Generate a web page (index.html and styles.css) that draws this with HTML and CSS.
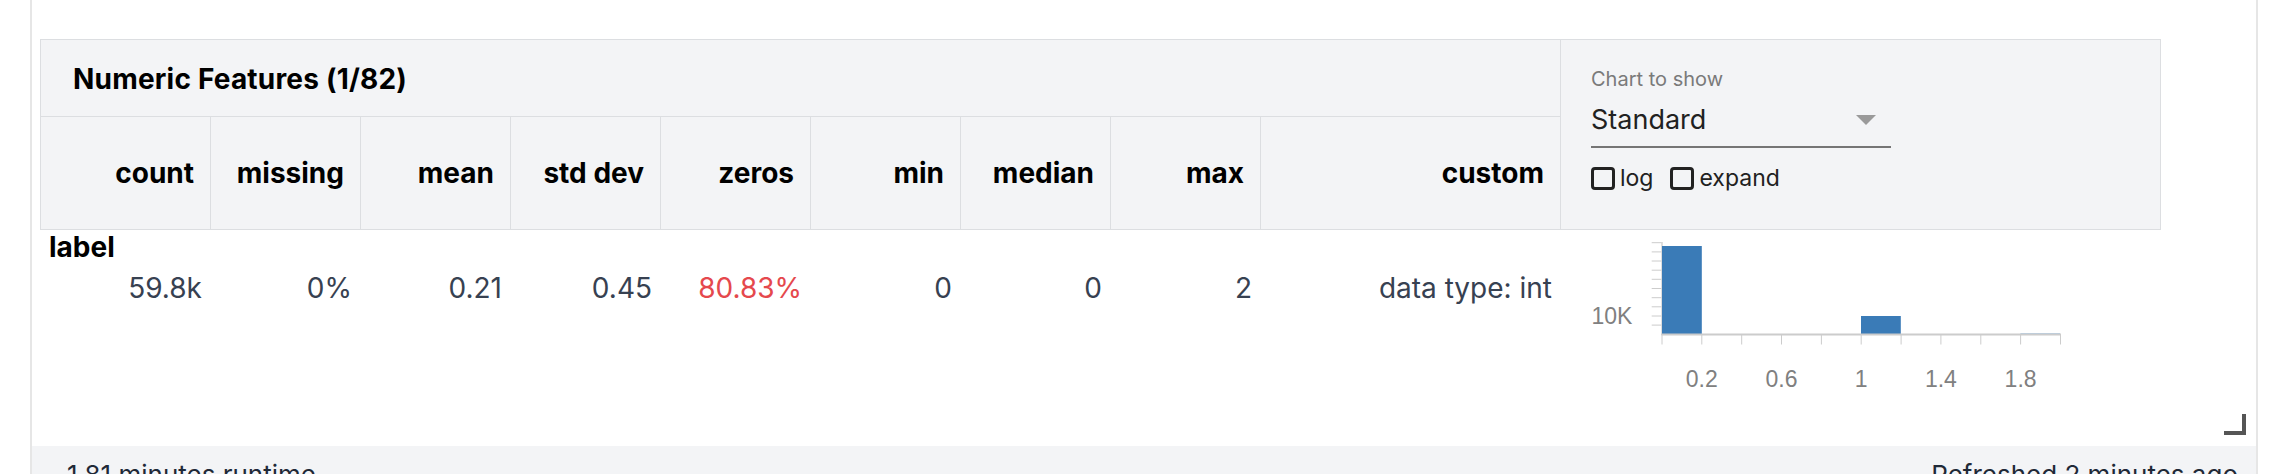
FILE: index.html
```html
<!DOCTYPE html>
<html>
<head>
<meta charset="utf-8">
<title>Numeric Features</title>
<link rel="stylesheet" href="styles.css">
</head>
<body>
<div class="card">
  <div class="output">
    <div class="facets">
      <div class="head">
        <div class="title">Numeric Features (1/82)</div>
        <div class="controls">
          <div class="ctl-label">Chart to show</div>
          <div class="select"><span class="sel-text">Standard</span><span class="arrow"></span></div>
          <div class="checks">
            <span class="check"><span class="box"></span>log</span>
            <span class="check"><span class="box"></span>expand</span>
          </div>
        </div>
        <div class="th">count</div>
        <div class="th">missing</div>
        <div class="th">mean</div>
        <div class="th">std dev</div>
        <div class="th">zeros</div>
        <div class="th">min</div>
        <div class="th">median</div>
        <div class="th">max</div>
        <div class="th">custom</div>
      </div>
      <div class="body">
        <div class="name">label</div>
        <div class="chart">
          <svg class="hist" width="480" height="160" viewBox="0 0 480 160">
            <g class="yticks">
              <line x1="61.7" y1="2.7" x2="71.5" y2="2.7"/>
              <line x1="61.7" y1="11.9" x2="71.5" y2="11.9"/>
              <line x1="61.7" y1="21" x2="71.5" y2="21"/>
              <line x1="61.7" y1="30.2" x2="71.5" y2="30.2"/>
              <line x1="61.7" y1="39.3" x2="71.5" y2="39.3"/>
              <line x1="61.7" y1="48.5" x2="71.5" y2="48.5"/>
              <line x1="61.7" y1="57.7" x2="71.5" y2="57.7"/>
              <line x1="61.7" y1="66.8" x2="71.5" y2="66.8"/>
              <line x1="61.7" y1="76" x2="71.5" y2="76"/>
              <line x1="61.7" y1="85.1" x2="71.5" y2="85.1"/>
            </g>
            <line class="axis" x1="72" y1="2" x2="72" y2="95"/>
            <rect class="bar" x="72" y="6" width="39.8" height="88.5"/>
            <rect class="bar" x="271" y="76" width="39.8" height="18.5"/>
            <rect class="bar-light" x="430.4" y="93" width="39.6" height="1.5"/>
            <line class="axis xaxis" x1="71.5" y1="94.5" x2="471" y2="94.5"/>
            <g class="xticks">
              <line x1="72" y1="94" x2="72" y2="104.5"/>
              <line x1="111.8" y1="94" x2="111.8" y2="104.5"/>
              <line x1="151.7" y1="94" x2="151.7" y2="104.5"/>
              <line x1="191.5" y1="94" x2="191.5" y2="104.5"/>
              <line x1="231.4" y1="94" x2="231.4" y2="104.5"/>
              <line x1="271.2" y1="94" x2="271.2" y2="104.5"/>
              <line x1="311.1" y1="94" x2="311.1" y2="104.5"/>
              <line x1="350.9" y1="94" x2="350.9" y2="104.5"/>
              <line x1="390.8" y1="94" x2="390.8" y2="104.5"/>
              <line x1="430.6" y1="94" x2="430.6" y2="104.5"/>
              <line x1="470.5" y1="94" x2="470.5" y2="104.5"/>
            </g>
            <text class="lbl" x="42.4" y="84.3" text-anchor="end">10K</text>
            <text class="lbl" x="111.8" y="147" text-anchor="middle">0.2</text>
            <text class="lbl" x="191.5" y="147" text-anchor="middle">0.6</text>
            <text class="lbl" x="271.2" y="147" text-anchor="middle">1</text>
            <text class="lbl" x="350.9" y="147" text-anchor="middle">1.4</text>
            <text class="lbl" x="430.6" y="147" text-anchor="middle">1.8</text>
          </svg>
        </div>
        <div class="td">59.8k</div>
        <div class="td">0%</div>
        <div class="td">0.21</div>
        <div class="td">0.45</div>
        <div class="td warn">80.83%</div>
        <div class="td">0</div>
        <div class="td">0</div>
        <div class="td">2</div>
        <div class="td">data type: int</div>
      </div>
    </div>
    <div class="resize"></div>
  </div>
  <div class="footer">
    <span>1.81 minutes runtime</span>
    <span>Refreshed 2 minutes ago</span>
  </div>
</div>
</body>
</html>
```

FILE: styles.css
```css
html, body {
  margin: 0;
  padding: 0;
  background: #ffffff;
}

body {
  font-family: Inter, "Noto Sans", "DejaVu Sans", sans-serif;
  color: #000;
  overflow: hidden;
}

.card {
  margin-left: 30px;
  width: 2224px;
  border-left: 2px solid #e6e6e6;
  border-right: 2px solid #e6e6e6;
  min-height: 520px;
}

.output {
  position: relative;
  height: 446px;
  box-sizing: border-box;
  padding: 39px 0 0 8px;
}

.facets {
  width: max-content;
}

.head {
  display: grid;
  grid-template-columns: 169px repeat(7, 149px) 299px 599px;
  grid-template-rows: 76px 112px;
  gap: 1px;
  padding: 1px;
  background: #dcdee1;
}

.title {
  grid-column: 1 / 10;
  grid-row: 1;
  background: #f3f4f6;
  display: flex;
  align-items: center;
  padding: 2px 0 0 32px;
  font-size: 28px;
  font-weight: 700;
  line-height: 34px;
  letter-spacing: 0.2px;
}

.controls {
  grid-column: 10;
  grid-row: 1 / 3;
  background: #f3f4f6;
  padding: 27px 0 0 30px;
  display: flex;
  flex-direction: column;
  align-items: flex-start;
}

.ctl-label {
  font-size: 20px;
  line-height: 24px;
  color: #7a7a7a;
}

.select {
  margin-top: 13px;
  width: 300px;
  display: flex;
  justify-content: space-between;
  align-items: center;
  padding-bottom: 10px;
  border-bottom: 2px solid #757575;
}

.sel-text {
  font-size: 27px;
  line-height: 32px;
  color: #212121;
}

.arrow {
  width: 0;
  height: 0;
  margin-right: 15px;
  border-left: 10px solid transparent;
  border-right: 10px solid transparent;
  border-top: 10px solid #9a9a9a;
}

.checks {
  margin-top: 18px;
  display: flex;
  gap: 17px;
}

.check {
  display: flex;
  align-items: center;
  gap: 5px;
  font-size: 23px;
  line-height: 24px;
  color: #212121;
}

.box {
  width: 24px;
  height: 23px;
  box-sizing: border-box;
  border: 3px solid #222;
  border-radius: 4px;
}

.th {
  grid-row: 2;
  background: #f3f4f6;
  display: flex;
  align-items: center;
  justify-content: flex-end;
  padding-right: 16px;
  font-size: 28px;
  font-weight: 700;
  line-height: 34px;
}

.body {
  display: grid;
  grid-template-columns: 170px repeat(7, 150px) 300px 600px;
  grid-template-rows: 34px auto;
}

.name {
  grid-column: 1 / 10;
  grid-row: 1;
  padding-left: 9px;
  font-size: 28px;
  font-weight: 700;
  line-height: 34px;
}

.chart {
  grid-column: 10;
  grid-row: 1 / 3;
  padding: 10px 0 0 30px;
}

.hist {
  display: block;
}

.hist line {
  stroke: #cccccc;
  stroke-width: 1;
}

.hist .axis {
  stroke: #cccccc;
  stroke-width: 1.3;
}

.hist .xaxis {
  stroke-width: 2;
}

.hist .bar {
  fill: #3a7bb7;
}

.hist .bar-light {
  fill: #b3cfe8;
}

.hist .lbl {
  font-family: "Liberation Sans", Arial, sans-serif;
  font-size: 23px;
  font-weight: 400;
  fill: #808080;
}

.td {
  grid-row: 2;
  margin-top: 7px;
  text-align: right;
  padding-right: 8px;
  font-size: 28px;
  line-height: 34px;
  color: #374151;
}

.td.warn {
  color: #e5484d;
}

.resize {
  position: absolute;
  right: 10px;
  bottom: 11px;
  width: 22px;
  height: 21px;
  box-sizing: border-box;
  border-right: 4px solid #555;
  border-bottom: 4px solid #555;
}

.footer {
  background: #f3f4f6;
  height: 80px;
  box-sizing: border-box;
  padding: 13px 18px 0 35px;
  display: flex;
  justify-content: space-between;
  font-size: 26px;
  line-height: 31px;
  color: #1f2937;
}
```
